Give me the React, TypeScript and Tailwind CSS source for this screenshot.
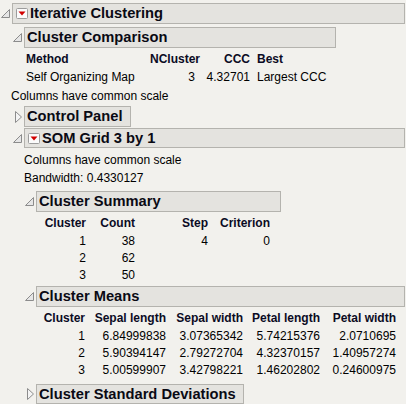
import type { ReactNode } from "react"

const font = { fontFamily: '"Liberation Sans", Arial, sans-serif' }

function OpenTri() {
    return (
        <svg width="9" height="9" viewBox="0 0 9 9">
            <polygon points="8.5,0.5 8.5,8.5 0.5,8.5" fill="#e6e6e6" stroke="#8c8c8c" strokeWidth="1" />
        </svg>
    )
}

function ClosedTri() {
    return (
        <svg width="7" height="12" viewBox="0 0 7 12">
            <polygon points="0.5,0.5 6.5,6 0.5,11.5" fill="#f4f4f4" stroke="#8c8c8c" strokeWidth="1" />
        </svg>
    )
}

function RedMenu() {
    return (
        <svg width="12" height="11" viewBox="0 0 12 11" className="shrink-0">
            <rect x="0.5" y="0.5" width="11" height="10" rx="1" fill="#fbfbfb" stroke="#9c9c9c" />
            <polygon points="2.5,3.5 9.5,3.5 6,7.5" fill="#d10000" />
        </svg>
    )
}

interface NodeProps {
    title: string
    width: string
    open?: boolean
    menu?: boolean
    top: string
    height?: string
    children?: ReactNode
}

function Node({ title, width, open = true, menu = false, top, height = "h-[21px]", children }: NodeProps) {
    return (
        <div className={top}>
            <div className="flex items-center">
                <div className="w-[12px] flex justify-end pr-[2px]">{open ? <OpenTri /> : <ClosedTri />}</div>
                <div className={`${width} ${height} flex items-center border border-[#b4b3ae] bg-[#e4e3df] ${menu ? "pl-[3px] gap-[2px]" : "pl-[2px]"}`}>
                    {menu && <RedMenu />}
                    <span className="text-[14.7px] font-bold text-[#0a0a14] leading-none whitespace-nowrap">{title}</span>
                </div>
            </div>
            {children && <div className="pl-[12px]">{children}</div>}
        </div>
    )
}

function Cell({ w, children, bold = false, left = false }: { w: string; children: ReactNode; bold?: boolean; left?: boolean }) {
    return (
        <div className={`${w} shrink-0 whitespace-nowrap ${left ? "text-left" : "text-right"} ${bold ? "font-bold text-[#0b0b24]" : "text-black"}`}>
            {children}
        </div>
    )
}

const summaryCols = ["w-[50px]", "w-[49px]", "w-[73px]", "w-[62px]"]
const meansCols = ["w-[49px]", "w-[81px]", "w-[77px]", "w-[77px]", "w-[76px]"]

const means = [
    ["1", "6.84999838", "3.07365342", "5.74215376", "2.0710695"],
    ["2", "5.90394147", "2.79272704", "4.32370157", "1.40957274"],
    ["3", "5.00599907", "3.42798221", "1.46202802", "0.24600975"],
]

const summary = [
    ["1", "38", "4", "0"],
    ["2", "62", "", ""],
    ["3", "50", "", ""],
]

export default function App() {
    return (
        <div className="w-[406px] h-[404px] overflow-hidden bg-[#f2f1ed] text-[12px] leading-none" style={font}>
            <Node title="Iterative Clustering" width="w-[393px]" menu top="pt-[3px]">
                <Node title="Cluster Comparison" width="w-[312px]" top="mt-[3px]">
                    <div className="mt-[2px] pl-[2px]">
                        <div className="flex h-[18px] items-center">
                            <Cell w="w-[124px]" bold left>Method</Cell>
                            <Cell w="w-[45px]" bold>NCluster</Cell>
                            <Cell w="w-[55px]" bold>CCC</Cell>
                            <div className="ml-[7px]"><Cell w="w-[70px]" bold left>Best</Cell></div>
                        </div>
                        <div className="flex h-[18px] items-center">
                            <Cell w="w-[124px]" left>Self Organizing Map</Cell>
                            <Cell w="w-[45px]">3</Cell>
                            <Cell w="w-[55px]">4.32701</Cell>
                            <div className="ml-[7px]"><Cell w="w-[80px]" left>Largest CCC</Cell></div>
                        </div>
                    </div>
                </Node>
                <div className="mt-[1px] -ml-[1px] h-[18px] flex items-center">Columns have common scale</div>
                <Node title="Control Panel" width="w-[107px]" open={false} top="mt-[1px]" />
                <Node title="SOM Grid 3 by 1" width="w-[381px]" menu top="mt-[1px]" height="h-[20px]">
                    <div className="mt-[3px] h-[18px] flex items-center">Columns have common scale</div>
                    <div className="h-[18px] flex items-center">Bandwidth: 0.4330127</div>
                    <Node title="Cluster Summary" width="w-[245px]" top="mt-[4px]">
                        <div className="mt-[2px]">
                            <div className="flex h-[18px] items-center">
                                {["Cluster", "Count", "Step", "Criterion"].map((h, i) => (
                                    <Cell key={h} w={summaryCols[i]} bold>{h}</Cell>
                                ))}
                            </div>
                            {summary.map((r) => (
                                <div key={r[0]} className="flex h-[17px] items-center">
                                    {r.map((v, i) => (
                                        <Cell key={i} w={summaryCols[i]}>{v}</Cell>
                                    ))}
                                </div>
                            ))}
                        </div>
                    </Node>
                    <Node title="Cluster Means" width="w-[369px]" top="mt-[3px]">
                        <div className="mt-[2px]">
                            <div className="flex h-[18px] items-center">
                                {["Cluster", "Sepal length", "Sepal width", "Petal length", "Petal width"].map((h, i) => (
                                    <Cell key={h} w={meansCols[i]} bold>{h}</Cell>
                                ))}
                            </div>
                            {means.map((r) => (
                                <div key={r[0]} className="flex h-[17px] items-center">
                                    {r.map((v, i) => (
                                        <Cell key={i} w={meansCols[i]}>{v}</Cell>
                                    ))}
                                </div>
                            ))}
                        </div>
                    </Node>
                    <Node title="Cluster Standard Deviations" width="w-[208px]" open={false} top="mt-[6px]" height="h-[20px]" />
                </Node>
            </Node>
        </div>
    )
}
